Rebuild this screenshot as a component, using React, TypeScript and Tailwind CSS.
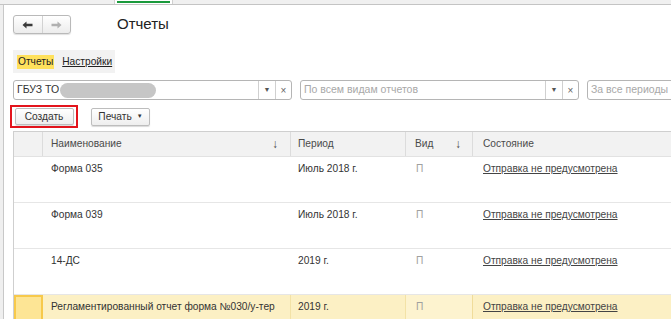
import { FC } from "react";

const font = { fontFamily: '"Liberation Sans", Arial, sans-serif' };

const Arrow: FC<{ dir: "left" | "right"; color: string }> = ({ dir, color }) => (
	<svg width="11" height="8" viewBox="0 0 11 8" className={dir === "right" ? "rotate-180" : ""}>
		<path d="M0.5 4 L4.5 0.5 L4.5 2.8 L10.5 2.8 L10.5 5.2 L4.5 5.2 L4.5 7.5 Z" fill={color} />
	</svg>
);

const Field: FC<{ text?: string; placeholder?: string; blob?: boolean; width: string; buttons?: boolean }> = ({
	text,
	placeholder,
	blob,
	width,
	buttons = true,
}) => (
	<div className={`flex h-[20px] shrink-0 items-stretch rounded-[3px] border border-[#b5b5b5] bg-white ${width}`}>
		<div className="flex flex-1 items-center overflow-hidden pl-[3px] text-[10.5px] whitespace-nowrap">
			{text && <span className="text-[#333]">{text}</span>}
			{blob && <span className="ml-[1px] h-[15px] w-[96px] rounded-full bg-[#c6c6c6] blur-[0.6px]" />}
			{placeholder && <span className="text-[#a8a8a8]">{placeholder}</span>}
		</div>
		{buttons && (
			<>
				<div className="flex w-[17px] items-center justify-center border-l border-[#d0d0d0] text-[7px] text-[#555]">▼</div>
				<div className="flex w-[16px] items-center justify-center border-l border-[#d0d0d0] text-[10px] text-[#666]">×</div>
			</>
		)}
	</div>
);

const rows = [
	{ name: "Форма 035", period: "Июль 2018 г." },
	{ name: "Форма 039", period: "Июль 2018 г." },
	{ name: "14-ДС", period: "2019 г." },
];

const cols = "grid grid-cols-[29px_248px_115px_67px_1fr]";

export default function App() {
	return (
		<div className="relative flex h-[319px] w-[671px] flex-col overflow-hidden bg-white text-[#333]" style={font}>
			{/* top strip */}
			<div className="flex h-[5px] shrink-0 border-b border-[#c4c4c4] bg-[#f0f0f0]">
				<div className="w-[114px]" />
				<div className="w-[59px] border-x border-[#d0d0d0] bg-white pt-[1px]">
					<div className="mx-[2px] h-[2px] bg-[#1a9a3c]" />
				</div>
			</div>
			<div className="flex flex-1">
				<div className="w-[4px] shrink-0 border-r border-[#c8c8c8] bg-[#efefef]" />
				<div className="flex flex-1 flex-col pl-[9px]">
					{/* nav + title */}
					<div className="mt-[10px] flex h-[19px] items-center">
						<div className="flex h-[19px] w-[58px] rounded-[3px] border border-[#b9b9b9] bg-gradient-to-b from-white to-[#ececec] shadow-[0_1px_1px_rgba(0,0,0,0.12)]">
							<div className="flex flex-1 items-center justify-center border-r border-[#d2d2d2]">
								<Arrow dir="left" color="#3a3a3a" />
							</div>
							<div className="flex flex-1 items-center justify-center">
								<Arrow dir="right" color="#b0b0b0" />
							</div>
						</div>
						<div className="ml-[46px] text-[15px] text-[#222]">Отчеты</div>
					</div>
					{/* tabs */}
					<div className="mt-[16px] flex h-[23px] w-[102px] items-center gap-[8px] bg-[#f2f2f2] pl-[4px] text-[10.2px]">
						<span className="bg-[#ffe15c] px-[1px] leading-[14px] text-[#222]">Отчеты</span>
						<span className="leading-[14px] text-[#222] underline">Настройки</span>
					</div>
					{/* filters */}
					<div className="mt-[7px] flex gap-[8px]">
						<Field text="ГБУЗ ТО" blob width="w-[279px]" />
						<Field placeholder="По всем видам отчетов" width="w-[279px]" />
						<Field placeholder="За все периоды" width="w-[100px]" buttons={false} />
					</div>
					{/* commands */}
					<div className="mt-[5px] -ml-[3px] flex items-center">
						<div className="flex h-[23px] w-[68px] items-center justify-center border-2 border-[#e3141c]">
							<div className="flex h-[17px] w-[59px] items-center justify-center rounded-[2px] border border-[#bdbdbd] bg-gradient-to-b from-white to-[#eeeeee] text-[10.2px] text-[#333] shadow-[0_1px_1px_rgba(0,0,0,0.15)]">
								Создать
							</div>
						</div>
						<div className="ml-[13px] flex h-[18px] w-[59px] items-center justify-center gap-[5px] rounded-[2px] border border-[#bdbdbd] bg-gradient-to-b from-white to-[#eeeeee] text-[10.2px] text-[#333] shadow-[0_1px_1px_rgba(0,0,0,0.15)]">
							Печать <span className="text-[6px]">▼</span>
						</div>
					</div>
					{/* table */}
					<div className="mt-[3px] flex flex-1 flex-col border-l border-t border-[#cfcfcf] text-[10.2px]">
						<div className={`${cols} h-[25px] shrink-0 border-b border-[#e2e2e2] bg-[#f2f2f2] text-[#4a4a4a]`}>
							<div className="border-r border-[#dcdcdc]" />
							<div className="flex items-center justify-between border-r border-[#dcdcdc] pl-[8px] pr-[12px]">
								<span>Наименование</span>
								<span className="text-[12px]">↓</span>
							</div>
							<div className="flex items-center border-r border-[#dcdcdc] pl-[7px]">Период</div>
							<div className="flex items-center justify-between border-r border-[#dcdcdc] pl-[9px] pr-[11px]">
								<span>Вид</span>
								<span className="text-[12px]">↓</span>
							</div>
							<div className="flex items-center pl-[10px]">Состояние</div>
						</div>
						{rows.map((row) => (
							<div key={row.name} className={`${cols} h-[46px] shrink-0 border-b border-[#e6e6e6] leading-[13px]`}>
								<div />
								<div className="pl-[8px] pt-[5px]">{row.name}</div>
								<div className="pl-[7px] pt-[5px]">{row.period}</div>
								<div className="pl-[10px] pt-[5px] text-[#a0a0a0]">П</div>
								<div className="pl-[10px] pt-[5px] text-[#444] underline">Отправка не предусмотрена</div>
							</div>
						))}
						<div className={`${cols} flex-1 bg-[#fcf0c4] leading-[13px]`}>
							<div className="border-2 border-b-0 border-[#f7c94b] bg-[#fde595]" />
							<div className="border-r border-[#f3e2a6] pl-[8px] pt-[5px] whitespace-nowrap">Регламентированный отчет форма №030/у-тер</div>
							<div className="border-r border-[#f3e2a6] pl-[7px] pt-[5px]">2019 г.</div>
							<div className="border-r border-[#f0dc9a] bg-[#fdf3cf] pl-[10px] pt-[5px] text-[#a0a0a0]">П</div>
							<div className="pl-[10px] pt-[5px] text-[#444] underline">Отправка не предусмотрена</div>
						</div>
					</div>
				</div>
			</div>
		</div>
	);
}
